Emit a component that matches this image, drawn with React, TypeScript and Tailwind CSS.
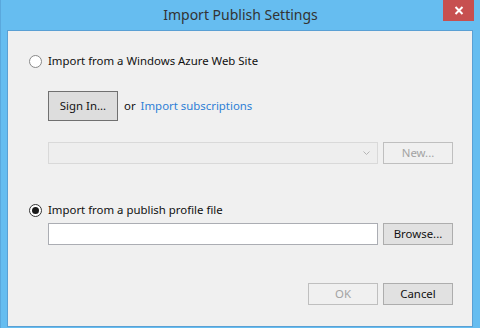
import React from "react";

const font = { fontFamily: '"Noto Sans", "Open Sans", sans-serif' };

function Radio({ checked, label }: { checked?: boolean; label: string }) {
  return (
    <div className="flex h-[16px] items-center gap-[6px]">
      <div
        className={`flex h-[13px] w-[13px] items-center justify-center rounded-full border bg-white ${
          checked ? "border-[#333333]" : "border-[#888888]"
        }`}
      >
        {checked && <div className="h-[7px] w-[7px] rounded-full bg-[#1a1a1a]" />}
      </div>
      <span className="text-[11.4px] leading-none text-[#111111]">{label}</span>
    </div>
  );
}

function Btn({
  children,
  disabled,
  h = "h-[22px]",
}: {
  children: React.ReactNode;
  disabled?: boolean;
  h?: string;
}) {
  return (
    <div
      className={`flex w-[70px] ${h} shrink-0 items-center justify-center border text-[11.4px] leading-none ${
        disabled
          ? "border-[#bfbfbf] bg-[#f0f0f0] text-[#a3a3a3]"
          : "border-[#adadad] bg-[#e1e1e1] text-[#111111]"
      }`}
    >
      {children}
    </div>
  );
}

export default function App() {
  return (
    <div
      className="flex h-[328px] w-[480px] flex-col border-l border-[#5aa8dd] bg-[#66bdf0]"
      style={font}
    >
      <div className="relative flex h-[30px] shrink-0 items-center justify-center">
        <span className="text-[14px] leading-none text-[#333333]">Import Publish Settings</span>
        <div className="absolute right-[6px] top-0 flex h-[21px] w-[31px] items-center justify-center bg-[#c75050]">
          <svg width="10" height="9" viewBox="0 0 10 9">
            <path d="M1.5 1 L8.5 8 M8.5 1 L1.5 8" stroke="white" strokeWidth="2" />
          </svg>
        </div>
      </div>
      <div className="ml-[6px] mr-[7px] flex flex-1 flex-col border border-[#5aa0d4] bg-[#f0f0f0] pl-[21px] pr-[19px]">
        <div className="mt-[22px]">
          <Radio label="Import from a Windows Azure Web Site" />
        </div>
        <div className="ml-[19px] mt-[22px] flex items-center">
          <div className="flex h-[30px] w-[70px] items-center justify-center border border-[#707070] bg-[#dddddd] text-[11.4px] leading-none text-[#111111]">
            Sign In...
          </div>
          <span className="ml-[6px] text-[11.4px] leading-none text-[#111111]">or</span>
          <span className="ml-[5px] text-[11.4px] leading-none text-[#2e7fd6]">Import subscriptions</span>
        </div>
        <div className="ml-[19px] mt-[21px] flex gap-[5px]">
          <div className="flex h-[22px] flex-1 items-center justify-end border border-[#d9d9d9] bg-[#eeeeee] pr-[7px]">
            <svg width="7" height="4" viewBox="0 0 7 4">
              <path d="M0.5 0.5 L3.5 3.5 L6.5 0.5" stroke="#b5b5b5" strokeWidth="1" fill="none" />
            </svg>
          </div>
          <Btn disabled>New...</Btn>
        </div>
        <div className="mt-[38px]">
          <Radio checked label="Import from a publish profile file" />
        </div>
        <div className="ml-[19px] mt-[5px] flex gap-[5px]">
          <div className="h-[22px] flex-1 border border-[#abadb3] bg-white" />
          <Btn>Browse...</Btn>
        </div>
        <div className="mt-[38px] flex justify-end gap-[5px]">
          <Btn disabled>OK</Btn>
          <Btn>Cancel</Btn>
        </div>
      </div>
      <div className="h-[1px] shrink-0" />
    </div>
  );
}
